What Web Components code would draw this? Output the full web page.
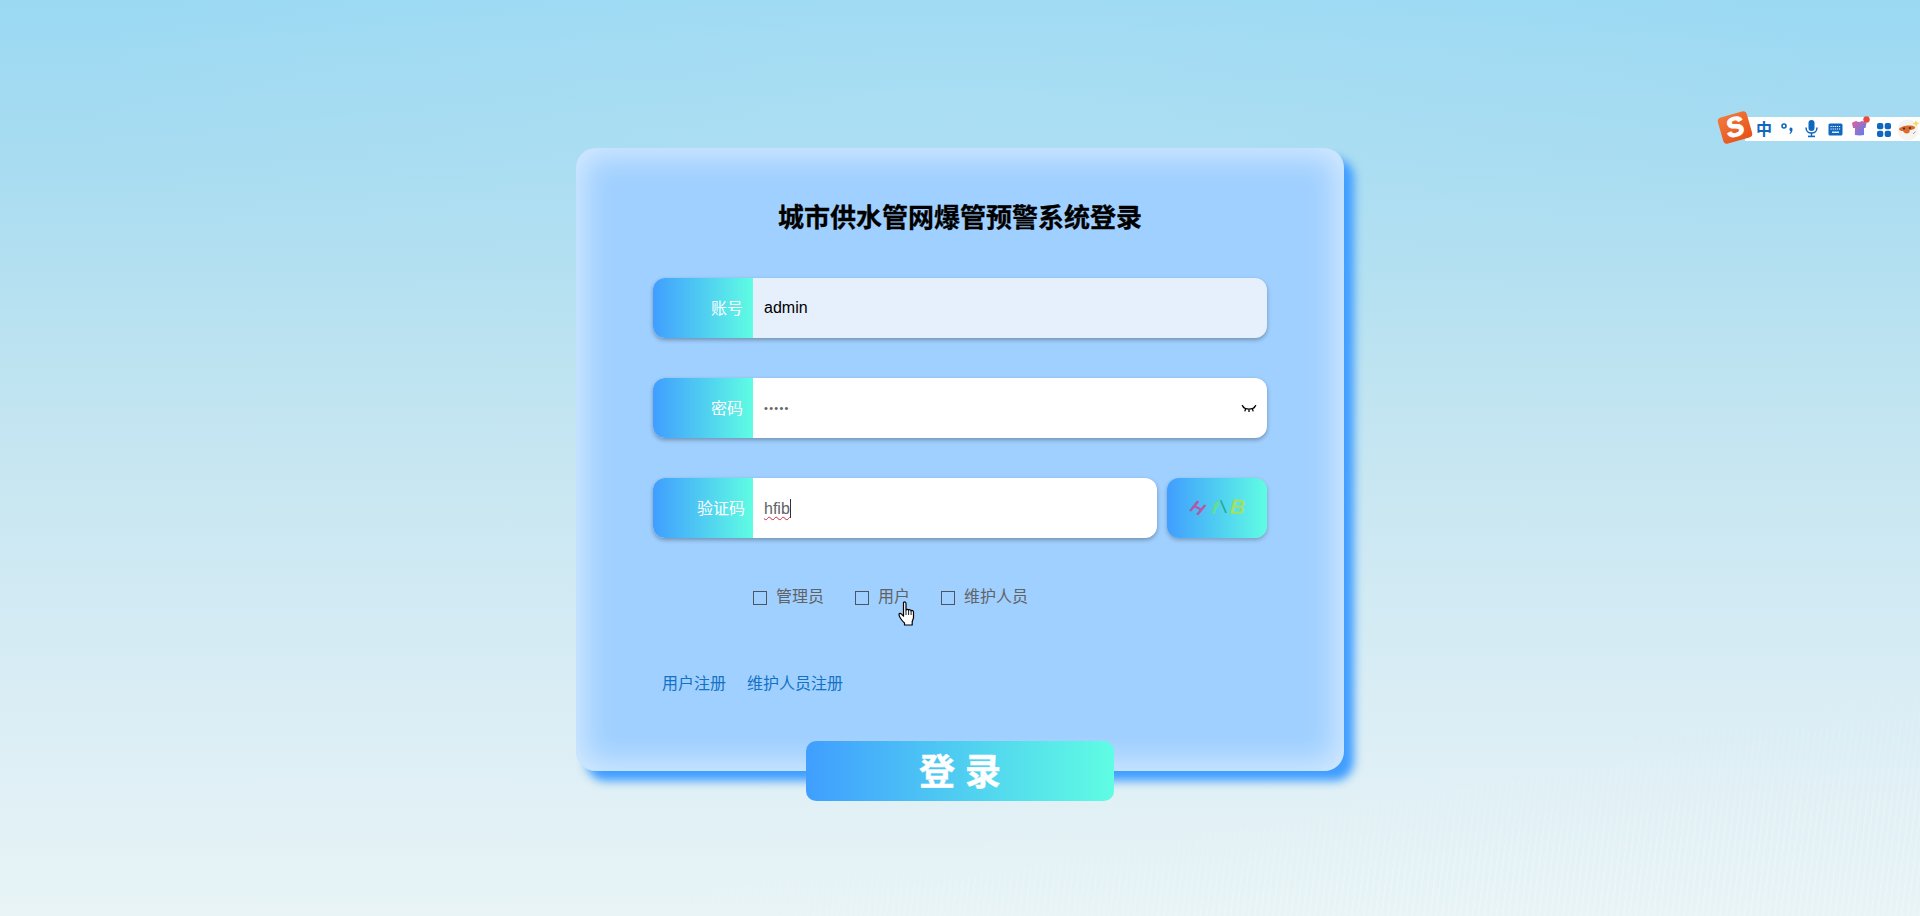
<!DOCTYPE html>
<html lang="zh">
<head>
<meta charset="utf-8">
<title>城市供水管网爆管预警系统登录</title>
<style>
  html, body { margin: 0; height: 100%; }
  body { font-family: "Liberation Sans", "Noto Sans CJK SC", sans-serif; overflow: hidden; }
</style>
</head>
<body>
<login-page>
  <login-card heading="城市供水管网爆管预警系统登录">
    <login-field label="账号" autofill>admin</login-field>
    <login-field label="密码" kind="password">•••••</login-field>
    <login-field label="验证码" kind="captcha">hfib</login-field>
    <role-picker slot="after">
      <role-check>管理员</role-check>
      <role-check>用户</role-check>
      <role-check>维护人员</role-check>
    </role-picker>
    <register-links slot="after"></register-links>
    <login-button slot="after">登 录</login-button>
  </login-card>
  <ime-toolbar></ime-toolbar>
  <hand-cursor></hand-cursor>
</login-page>

<script>
const gradient = 'linear-gradient(to right, #409eff, #5ffde3)';

const shadow = (el, html) => {
  el.attachShadow({mode: 'open'}).innerHTML = html;
};

class LoginPage extends HTMLElement {
  connectedCallback() {
    shadow(this, `
    <style>
    :host {
      display: flex;
      justify-content: center;
      align-items: flex-start;
      position: relative;
      box-sizing: border-box;
      height: 916px;
      padding-top: 148px;
      overflow: hidden;
      background:
        radial-gradient(ellipse 900px 240px at 50% 110px, rgba(186,230,246,.28), rgba(186,230,246,0)),
        linear-gradient(to bottom, #9bd9f3 0, #a8dcf1 160px, #c3e5f1 420px, #daedf5 700px, #e8f4f6 916px);
    }
    :host::before {
      content: '';
      position: absolute;
      inset: 0;
      background: repeating-linear-gradient(97deg, rgba(255,255,255,.2) 0 2px, transparent 2px 6px);
      -webkit-mask-image: linear-gradient(171deg, transparent 80%, #000 92%);
      mask-image: linear-gradient(171deg, transparent 80%, #000 92%);
    }
    ::slotted(login-card) { position: relative; }
    </style>
    <slot></slot>`);
  }
}

class LoginCard extends HTMLElement {
  connectedCallback() {
    shadow(this, `
    <style>
    :host {
      display: flex;
      flex-direction: column;
      box-sizing: border-box;
      width: 768px;
      height: 623px;
      padding: 52px 77px 0;
      border-radius: 20px;
      background: #a0d0ff;
      box-shadow: inset 0 0 30px 8px rgba(255,255,255,.55), 10px 10px 10px #409eff;
    }
    h1 {
      margin: 0 0 42px;
      font-size: 26px;
      line-height: 36px;
      font-weight: bold;
      color: #000;
      text-align: center;
      -webkit-text-stroke: .3px #000;
    }
    .rows { display: flex; flex-direction: column; gap: 40px; }
    </style>
    <h1>${this.getAttribute('heading')}</h1>
    <div class="rows"><slot></slot></div>
    <slot name="after"></slot>`);
  }
}

// label + value row. kind = password draws the eye, captcha adds the code box
class LoginField extends HTMLElement {
  connectedCallback() {
    const kind = this.getAttribute('kind');
    const eye = kind === 'password' ? `
      <svg class="eye" width="16" height="10" viewBox="0 0 16 10" fill="none" stroke="#000" stroke-width="1.3">
        <path d="M2 3.2c3 2.6 9 2.6 12 0"/>
        <path d="M1 1.2l2.2 2.4M4.6 5l-.8 2.4M8 5.6v2.4M11.4 5l.8 2.4M15 1.2l-2.2 2.4"/>
      </svg>` : '';
    const captcha = kind === 'captcha' ? `<captcha-box></captcha-box>` : '';
    shadow(this, `
    <style>
    :host { display: flex; gap: 10px; height: 60px; }
    .box {
      flex: 1;
      display: flex;
      align-items: center;
      border-radius: 12px;
      overflow: hidden;
      box-shadow: 0 2px 4px rgba(0,0,0,.3);
      background: #fff;
    }
    label {
      box-sizing: border-box;
      width: 100px;
      height: 100%;
      flex: none;
      display: flex;
      align-items: center;
      justify-content: flex-end;
      padding: 0 ${kind === 'captcha' ? 8 : 10}px 2px 0;
      font-size: 16px;
      color: #fff;
      background: ${gradient};
    }
    .value {
      flex: 1;
      padding-left: 11px;
      font-size: 16px;
      color: #000;
    }
    :host([autofill]) .box { background: #e6f0fd; }
    :host([kind=password]) .value { font-size: 11px; letter-spacing: 1.3px; color: #606266; }
    :host([kind=captcha]) .value { color: #606266; }
    :host([kind=captcha]) .typed {
      display: inline-block;
      border-right: 1px solid #333;
      line-height: 19px;
      text-decoration: underline wavy #c92a45 1px;
      text-underline-offset: 2px;
    }
    .eye { flex: none; margin: 2px 10px 0 0; }
    </style>
    <div class="box">
      <label>${this.getAttribute('label')}</label>
      <div class="value"><span class="typed"><slot></slot></span></div>${eye}
    </div>${captcha}`);
  }
}

class CaptchaBox extends HTMLElement {
  connectedCallback() {
    shadow(this, `
    <style>
    :host {
      display: block;
      position: relative;
      flex: none;
      width: 100px;
      height: 60px;
      border-radius: 12px;
      background: ${gradient};
      box-shadow: 0 2px 4px rgba(0,0,0,.25);
      font: italic bold 18px "Liberation Sans", sans-serif;
    }
    span { position: absolute; line-height: 20px; }
    </style>
    <span style="left:24px;top:20px;color:#b05aa8;transform:rotate(28deg)">H</span>
    <span style="left:45px;top:20px;color:#62e08e;transform:rotate(8deg)">f</span>
    <span style="left:54px;top:19px;color:#17a87c;font-style:normal;font-weight:normal;transform:rotate(-8deg)">\\</span>
    <span style="left:63px;top:19px;color:#9fe06a;font-size:21px;transform:rotate(4deg)">B</span>`);
  }
}

class RolePicker extends HTMLElement {
  connectedCallback() {
    shadow(this, `
    <style>
    :host {
      display: flex;
      flex: none;
      gap: 31px;
      height: 20px;
      margin-top: 49px;
      padding-left: 100px;
    }
    </style>
    <slot></slot>`);
  }
}

class RoleCheck extends HTMLElement {
  connectedCallback() {
    shadow(this, `
    <style>
    :host {
      display: flex;
      align-items: center;
      gap: 9px;
      font-size: 16px;
      line-height: 20px;
      color: #606266;
    }
    i {
      display: block;
      box-sizing: border-box;
      width: 14px;
      height: 14px;
      margin-top: 2px;
      border: 1px solid #4d5560;
    }
    </style>
    <i></i><slot></slot>`);
  }
}

class RegisterLinks extends HTMLElement {
  connectedCallback() {
    shadow(this, `
    <style>
    :host {
      display: flex;
      flex: none;
      gap: 21px;
      height: 22px;
      margin-top: 66px;
      padding-left: 9px;
      font-size: 16px;
      line-height: 22px;
    }
    a { color: #1472c4; text-decoration: none; }
    </style>
    <a href="#">用户注册</a><a href="#">维护人员注册</a>`);
  }
}

class LoginButton extends HTMLElement {
  connectedCallback() {
    shadow(this, `
    <style>
    :host {
      display: flex;
      flex: none;
      align-items: center;
      justify-content: center;
      box-sizing: border-box;
      width: 308px;
      height: 60px;
      margin: 46px auto 0;
      padding-bottom: 4px;
      border-radius: 10px;
      background: ${gradient};
      color: #fff;
      font-size: 36px;
      font-weight: bold;
      -webkit-text-stroke: .4px #fff;
    }
    </style>
    <slot></slot>`);
  }
}

// the sogou input method bar, floats over the page
class ImeToolbar extends HTMLElement {
  connectedCallback() {
    shadow(this, `
    <style>
    :host {
      position: absolute;
      top: 117px;
      right: 0;
      width: 175px;
      height: 24px;
      display: flex;
      align-items: center;
      background: #fff;
      color: #0f67c0;
    }
    .logo {
      position: absolute;
      left: -25px;
      top: -3px;
      width: 30px;
      height: 27px;
      border-radius: 4px;
      background: linear-gradient(160deg, #f27a3c, #e6501a);
      transform: rotate(-16deg);
      color: #fff;
      font: italic bold 27px/27px "Liberation Sans", sans-serif;
      -webkit-text-stroke: 1px #fff;
      text-align: center;
    }
    .zh { position: absolute; left: 11px; top: -1px; font: bold 16px/24px "Noto Sans CJK SC", sans-serif; }
    svg { position: absolute; }
    </style>
    <div class="logo">S</div>
    <span class="zh">中</span>
    <svg style="left:36px;top:6px" width="13" height="12" viewBox="0 0 13 12" fill="#0f67c0">
      <circle cx="3" cy="3" r="2" fill="none" stroke="#0f67c0" stroke-width="1.6"/>
      <path d="M9.500 4.500a1.700 1.700 0 0 1 2 2c0 2-1 3.500-2.400 4.500l-.6-.6c.7-.7 1.100-1.400 1.200-2.300-1.600-.2-1.600-3.200-.2-3.600z"/>
    </svg>
    <svg style="left:60px;top:3px" width="13" height="18" viewBox="0 0 13 18" fill="#0f67c0">
      <rect x="3.500" y="0" width="6" height="11" rx="3"/>
      <path d="M1 7.500c0 3.500 2.400 5.600 5.500 5.600S12 11 12 7.500" fill="none" stroke="#0f67c0" stroke-width="1.500"/>
      <rect x="5.800" y="13" width="1.400" height="3"/>
      <rect x="3" y="15.600" width="7" height="1.600"/>
    </svg>
    <svg style="left:83px;top:6px" width="15" height="13" viewBox="0 0 15 13">
      <rect x=".5" y=".5" width="14" height="12" rx="1.500" fill="#0f67c0"/>
      <path d="M2.500 3.500h10M2.500 6h10" stroke="#fff" stroke-width="1.200" stroke-dasharray="1.200 .9"/>
      <path d="M4 9.200h7" stroke="#fff" stroke-width="1.300"/>
    </svg>
    <svg style="left:106px;top:-1px" width="20" height="21" viewBox="0 0 20 21">
      <defs><linearGradient id="shirt" x1="0" y1="0" x2="1" y2="1"><stop offset="0" stop-color="#e0609a"/><stop offset="1" stop-color="#4f82f5"/></linearGradient></defs>
      <path d="M1 7c1-1 3-2 4.500-2 1 1.200 4 1.200 5 0 1.500 0 4 1 5 2l-1 5h-1.500c0 3 .2 5 0 7-3 .6-6 .6-9 0-.2-2 0-4 0-7H2z" fill="url(#shirt)"/>
      <circle cx="15.500" cy="3.500" r="3.200" fill="#ea4b3c"/>
    </svg>
    <svg style="left:132px;top:6px" width="14" height="14" viewBox="0 0 14 14" fill="#0f67c0">
      <rect width="6.300" height="6.300" rx="2"/><rect x="7.700" width="6.300" height="6.300" rx="2"/>
      <rect y="7.700" width="6.300" height="6.300" rx="2"/><rect x="7.700" y="7.700" width="6.300" height="6.300" rx="2"/>
    </svg>
    <svg style="left:152px;top:1px" width="23" height="23" viewBox="0 0 23 23">
      <circle cx="11" cy="12" r="10.500" fill="#f6f4f0"/>
      <path d="M2 11c2-3 12-5 16-2 1 2-3 3-5 3l-1 3c-3 1-5 0-6-2-2 0-4-.5-4-2z" fill="#dd6a2a"/>
      <circle cx="7" cy="10.500" r="1.100" fill="#333"/><circle cx="13" cy="10" r="1.100" fill="#333"/>
      <path d="M16 16l2.500-2.500" stroke="#999" stroke-width="1"/>
      <path d="M19 2l1 2.500 2.500 1-2.500 1-1 2.500-1-2.500-2.500-1 2.500-1z" fill="#f6d95a"/>
    </svg>`);
  }
}

class HandCursor extends HTMLElement {
  connectedCallback() {
    shadow(this, `
    <style>
    :host { position: absolute; left: 898px; top: 601px; width: 20px; height: 25px; }
    svg { display: block; }
    </style>
    <svg width="20" height="25" viewBox="0 0 20 25">
      <path d="M5.500 1.500c1-1 2.500-.6 2.500 1V9c.4-1 2.400-1 2.600.3.500-.9 2.300-.8 2.500.5.600-.6 2.300-.4 2.400 1.200V16c0 2-.8 3-1.300 4.500V24H6.500v-2C4 20 1 15.500 1 13.500c0-1.500 1.600-1.600 2.500-.4l2 2.100V2z" fill="#fff" stroke="#000" stroke-width="1.200" stroke-linejoin="round"/>
      <path d="M8 9v5M10.600 9.300V14M13.100 9.800V14" stroke="#000" stroke-width=".9" fill="none"/>
    </svg>`);
  }
}

customElements.define('login-page', LoginPage);
customElements.define('login-card', LoginCard);
customElements.define('login-field', LoginField);
customElements.define('captcha-box', CaptchaBox);
customElements.define('role-picker', RolePicker);
customElements.define('role-check', RoleCheck);
customElements.define('register-links', RegisterLinks);
customElements.define('login-button', LoginButton);
customElements.define('ime-toolbar', ImeToolbar);
customElements.define('hand-cursor', HandCursor);
</script>
</body>
</html>
